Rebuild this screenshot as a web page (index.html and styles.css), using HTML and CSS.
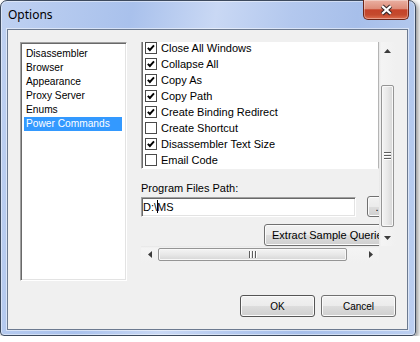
FILE: index.html
```html
<!DOCTYPE html>
<html lang="en">
<head>
<meta charset="UTF-8">
<title>Options</title>
<link rel="stylesheet" href="styles.css">
</head>
<body>
<div class="window">
<div class="titlebar">
<span class="title">Options</span>
<div class="close-btn">
<svg width="46" height="19" viewBox="0 0 46 19">
<path d="M19 6 L28 14 M28 6 L19 14" stroke="#3b2b2b" stroke-width="4.4" fill="none"/>
<path d="M19 6 L28 14 M28 6 L19 14" stroke="#fff" stroke-width="2.2" fill="none"/>
</svg>
</div>
</div>
<div class="client">
<div class="top-row">
<ul class="cat-list">
<li class="cat-item">Disassembler</li>
<li class="cat-item">Browser</li>
<li class="cat-item">Appearance</li>
<li class="cat-item">Proxy Server</li>
<li class="cat-item">Enums</li>
<li class="cat-item selected">Power Commands</li>
</ul>
<div class="panel">
<div class="panel-view">
<div class="panel-content">
<div class="check-list">
<div class="check-item"><span class="check-box on"></span>Close All Windows</div>
<div class="check-item"><span class="check-box on"></span>Collapse All</div>
<div class="check-item"><span class="check-box on"></span>Copy As</div>
<div class="check-item"><span class="check-box on"></span>Copy Path</div>
<div class="check-item"><span class="check-box on"></span>Create Binding Redirect</div>
<div class="check-item"><span class="check-box"></span>Create Shortcut</div>
<div class="check-item"><span class="check-box on"></span>Disassembler Text Size</div>
<div class="check-item"><span class="check-box"></span>Email Code</div>
</div>
<div class="path-label">Program Files Path:</div>
<div class="path-row">
<div class="textbox">D:\<span class="caret"></span>MS</div>
<div class="btn btn-browse">...</div>
</div>
<div class="btn btn-extract">Extract Sample Queries</div>
</div>
</div>
<div class="vscroll">
<div class="sb-arrow"><svg width="7" height="4" viewBox="0 0 7 4"><path d="M0 4 L3.5 0 L7 4 Z" fill="#3c3c3c"/></svg></div>
<div class="sb-track">
<div class="thumb vthumb"><span class="grip"></span><span class="grip"></span><span class="grip"></span></div>
</div>
<div class="sb-arrow"><svg width="7" height="4" viewBox="0 0 7 4"><path d="M0 0 L3.5 4 L7 0 Z" fill="#3c3c3c"/></svg></div>
</div>
<div class="hscroll">
<div class="sb-arrow"><svg width="4" height="7" viewBox="0 0 4 7"><path d="M4 0 L0 3.5 L4 7 Z" fill="#3c3c3c"/></svg></div>
<div class="sb-track">
<div class="thumb hthumb"><span class="grip"></span><span class="grip"></span><span class="grip"></span></div>
</div>
<div class="sb-arrow"><svg width="4" height="7" viewBox="0 0 4 7"><path d="M0 0 L4 3.5 L0 7 Z" fill="#3c3c3c"/></svg></div>
</div>
<div class="sb-corner"></div>
</div>
</div>
<div class="dialog-btns">
<div class="btn btn-dialog default">OK</div>
<div class="btn btn-dialog">Cancel</div>
</div>
</div>
</div>
</body>
</html>
```

FILE: styles.css
```css
html,body{
margin:0px;
padding:0px;
background:#fff;
}
*{font-family:"Liberation Sans",Arial,sans-serif;}
.window{
width:416px;
height:336px;
box-sizing:border-box;
border:1px solid #3d4a5e;
border-radius:7px 7px 4px 4px;
background:linear-gradient(100deg,#bfd1f1 0%,#a9c1ec 28%,#c9d8f4 46%,#b3c8ee 62%,#a7bfea 76%,#bccff0 100%);
box-shadow:2px 2px 5px rgba(0,0,0,0.45),inset 0 0 0 1px rgba(255,255,255,0.45);
display:flex;
flex-direction:column;
}
.titlebar{
height:28px;
flex-shrink:0;
display:flex;
justify-content:space-between;
align-items:flex-start;
padding-left:7px;
}
.title{
font-family:"Noto Sans","Open Sans",sans-serif;
font-size:12px;
line-height:28px;
color:#000;
}
.close-btn{
width:46px;
height:20px;
margin-top:-1px;
margin-right:6px;
box-sizing:border-box;
border:1px solid #6b2417;
border-top:none;
border-radius:0 0 5px 5px;
background:linear-gradient(#eab0a2 0%,#de8d7a 45%,#c5432a 52%,#c44a2e 78%,#de6e50 100%);
box-shadow:inset 0 0 0 1px rgba(255,255,255,0.35);
display:flex;
}
.client{
flex-grow:1;
margin:0 7px 5px 6px;
border:1px solid #6c7a90;
background:#f0f0f0;
padding:12px 11px 12px 12px;
display:flex;
flex-direction:column;
box-shadow:0 0 0 1px rgba(255,255,255,0.5);
}
.top-row{
display:flex;
gap:14px;
align-items:flex-start;
}
.cat-list{
width:107px;
height:239px;
box-sizing:border-box;
margin:0;
padding:4px 4px 0 3px;
list-style:none;
background:#fff;
border:1px solid;
border-color:#a0a0a0 #fff #fff #a0a0a0;
box-shadow:inset 1px 1px #696969,inset -1px -1px #e3e3e3;
font-size:10.2px;
}
.cat-item{
height:14px;
line-height:14px;
padding-left:2px;
color:#000;
white-space:nowrap;
}
.cat-item.selected{
background:#3399ff;
color:#fff;
}
.panel{
width:255px;
height:221px;
display:grid;
grid-template-columns:238px 17px;
grid-template-rows:204px 17px;
}
.panel-view{
overflow:hidden;
}
.panel-content{
width:255px;
margin-top:-2px;
display:flex;
flex-direction:column;
font-size:11px;
}
.check-list{
width:238px;
box-sizing:border-box;
background:#fff;
border-left:1px solid #a0a0a0;
border-right:1px solid #b4b4b4;
border-bottom:1px solid #fff;
box-shadow:inset 1px 0 #696969;
padding-left:3px;
}
.check-item{
height:16px;
display:flex;
align-items:center;
gap:4px;
white-space:nowrap;
color:#000;
}
.check-box{
width:12px;
height:12px;
box-sizing:border-box;
border:1px solid #4a4a4a;
background:#fff;
flex-shrink:0;
}
.check-box.on{
background:#fff url("data:image/svg+xml,%3Csvg xmlns='http://www.w3.org/2000/svg' width='10' height='10' viewBox='0 0 10 10'%3E%3Cpath d='M1.8 4.8 L3.9 7 L8 2.4' stroke='%23000' stroke-width='1.9' fill='none'/%3E%3C/svg%3E") no-repeat center;
}
.path-label{
margin-top:12px;
line-height:15px;
color:#000;
}
.path-row{
display:flex;
align-items:flex-end;
gap:11px;
}
.textbox{
width:215px;
height:20px;
flex-shrink:0;
box-sizing:border-box;
background:#fff;
border:1px solid;
border-color:#a0a0a0 #fff #fff #a0a0a0;
box-shadow:inset 1px 1px #696969,inset -1px -1px #e3e3e3;
padding-left:1px;
line-height:18px;
color:#000;
}
.caret{
display:inline-block;
width:1px;
height:13px;
background:#000;
vertical-align:-2px;
margin-right:-1px;
}
.btn{
box-sizing:border-box;
border:1px solid #707070;
border-radius:3px;
background:linear-gradient(#f2f2f2 0%,#ebebeb 50%,#dddddd 51%,#cfcfcf 100%);
box-shadow:inset 0 0 0 1px #fbfbfb;
display:flex;
align-items:center;
justify-content:center;
color:#000;
white-space:nowrap;
flex-shrink:0;
}
.btn-browse{
width:26px;
height:21px;
font-size:11px;
}
.btn-extract{
width:132px;
height:22px;
margin-top:7px;
align-self:flex-end;
justify-content:flex-start;
padding-left:7px;
font-size:11px;
}
.vscroll,.hscroll{
display:flex;
background:linear-gradient(90deg,#e6e6e6 0px,#f4f4f4 2px,#f0f0f0 100%);
}
.vscroll{flex-direction:column;}
.hscroll{background:linear-gradient(#e6e6e6 0px,#f4f4f4 2px,#f0f0f0 100%);}
.sb-arrow{
width:17px;
height:17px;
flex-shrink:0;
display:flex;
align-items:center;
justify-content:center;
}
.sb-track{
flex-grow:1;
display:flex;
}
.vscroll .sb-track{flex-direction:column;}
.thumb{
box-sizing:border-box;
border:1px solid #959595;
border-radius:2px;
box-shadow:inset 0 0 0 1px #f8f8f8;
display:flex;
align-items:center;
justify-content:center;
gap:1px;
}
.vthumb{
height:142px;
margin:26px 2px 0 2px;
flex-direction:column;
background:linear-gradient(90deg,#f4f4f4 0%,#e8e8e8 50%,#d6d6d6 100%);
}
.hthumb{
width:189px;
margin:2px 0 2px 0;
background:linear-gradient(#f4f4f4 0%,#e8e8e8 50%,#d6d6d6 100%);
}
.vthumb .grip{
width:7px;
height:1px;
background:#5e5e5e;
border-bottom:1px solid #fff;
}
.hthumb .grip{
width:1px;
height:7px;
background:#5e5e5e;
border-right:1px solid #fff;
}
.sb-corner{
background:#f0f0f0;
}
.dialog-btns{
margin-top:14px;
display:flex;
justify-content:flex-end;
gap:6px;
}
.btn-dialog{
width:75px;
height:22px;
font-size:10px;
}
.btn-dialog.default{
border-color:#555;
}
```
